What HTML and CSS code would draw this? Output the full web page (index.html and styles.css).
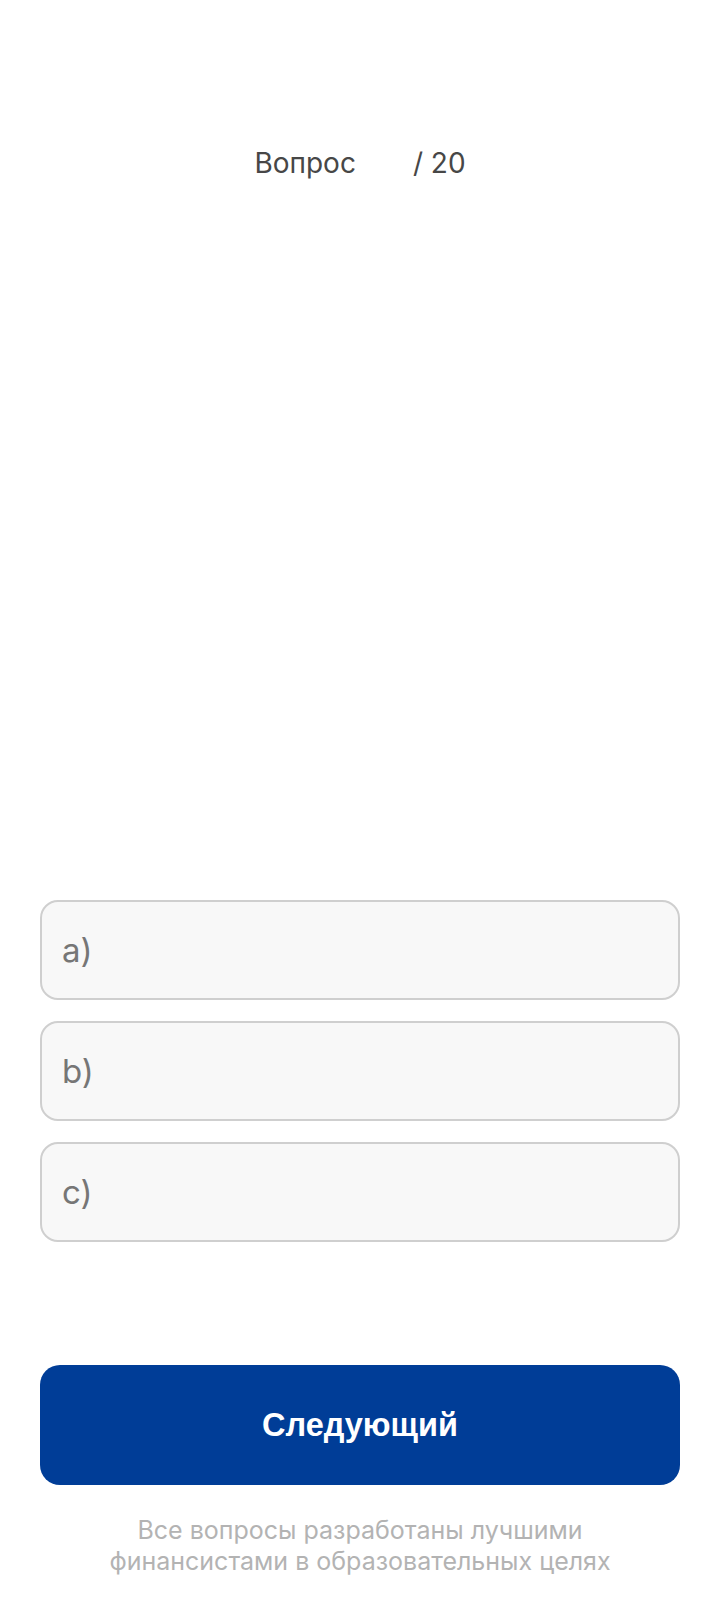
FILE: index.html
```html
<!DOCTYPE html>
<html lang="ru">
<head>
<meta charset="utf-8">
<title>Вопрос</title>
<link rel="stylesheet" href="styles.css">
</head>
<body>
<div class="screen">
  <header class="counter">
    <span class="counter-label">Вопрос</span>
    <span class="counter-num"></span>
    <span class="counter-total">/ 20</span>
  </header>
  <main class="question"></main>
  <ul class="options">
    <li class="option">a)</li>
    <li class="option">b)</li>
    <li class="option">c)</li>
  </ul>
  <button class="next">Следующий</button>
  <p class="note">Все вопросы разработаны лучшими<br>финансистами в образовательных целях</p>
</div>
</body>
</html>
```
FILE: styles.css
```css
* { box-sizing: border-box; }
html, body { margin: 0; padding: 0; background: #fff; }
.screen {
  width: 720px;
  height: 1599px;
  display: flex;
  flex-direction: column;
  font-family: "Inter", "Noto Sans", sans-serif;
}
.counter {
  padding-top: 146px;
  display: flex;
  justify-content: center;
  align-items: center;
  font-size: 28px;
  line-height: 34px;
  color: #474747;
}
.counter-num { display: inline-block; width: 57px; }
.question { flex: 1; }
.options {
  list-style: none;
  margin: 0 40px;
  padding: 0;
  display: flex;
  flex-direction: column;
  gap: 21px;
}
.option {
  height: 100px;
  border: 2px solid #cfcfcf;
  border-radius: 18px;
  background: #f8f8f8;
  display: flex;
  align-items: center;
  padding-left: 20px;
  font-size: 33px;
  color: #767676;
}
.next {
  margin: 123px 40px 0;
  height: 120px;
  border: 0;
  border-radius: 20px;
  background: #003d97;
  color: #fff;
  font-family: "Liberation Sans", Arial, sans-serif;
  font-weight: 700;
  font-size: 32.5px;
}
.note {
  margin: 30px 0 0;
  padding-bottom: 22px;
  text-align: center;
  font-size: 25px;
  line-height: 31px;
  color: #b3b3b3;
}
```
